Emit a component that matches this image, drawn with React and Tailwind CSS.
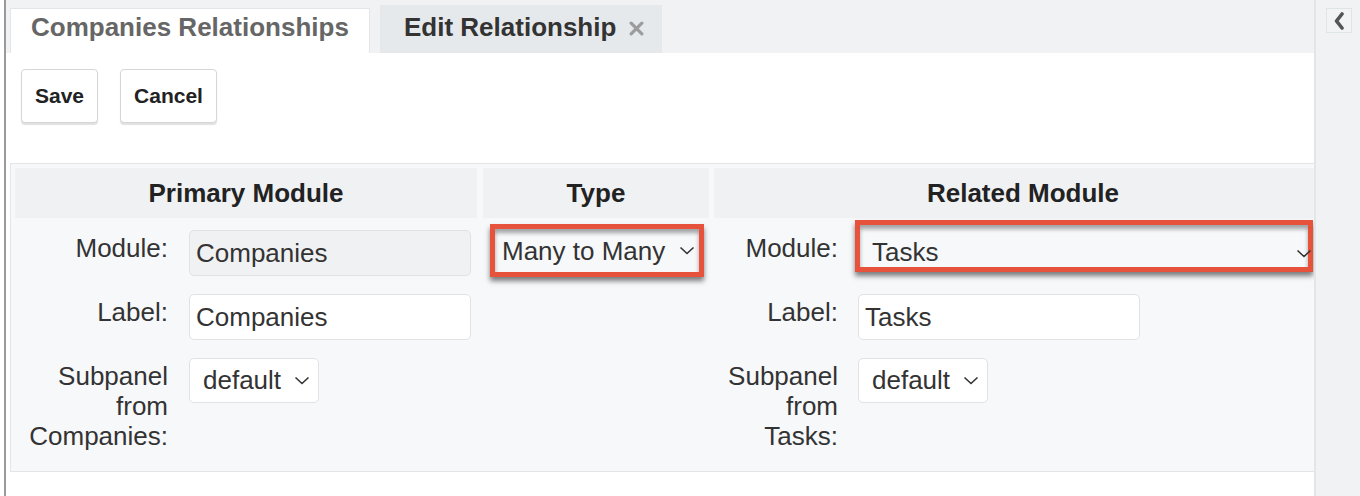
import React from 'react';

const Chevron = ({ className = '' }) => (
  <svg viewBox="0 0 16 9" className={`h-[9px] w-[16px] shrink-0 ${className}`} aria-hidden>
    <polyline points="1.5,1.5 8,7.5 14.5,1.5" fill="none" stroke="#333" strokeWidth="1.6" />
  </svg>
);

function TextInput({ value, disabled = false }) {
  return (
    <input
      readOnly
      value={value}
      className={[
        'h-[46px] w-[282px] rounded-[5px] border border-[#dfe3e6] px-[6px] text-[26px] text-[#333] outline-none',
        disabled ? 'bg-[#f0f1f3]' : 'bg-white',
      ].join(' ')}
    />
  );
}

function SmallSelect({ value }) {
  return (
    <div className="flex h-[45px] w-[130px] items-center rounded-[5px] border border-[#dfe3e6] bg-white pl-[13px] text-[26px] text-[#333]">
      <span>{value}</span>
      <Chevron className="ml-[13px]" />
    </div>
  );
}

function Label({ children, width }) {
  return (
    <div className={`${width} shrink-0 pt-[3px] text-right text-[26px] leading-[30px] text-[#333]`}>
      {children}
    </div>
  );
}

export default function App() {
  return (
    <div className="flex h-[496px] w-full overflow-hidden bg-white font-['Liberation_Sans',Arial,sans-serif] text-[#333]">
      <main className="ml-[4px] flex min-w-0 flex-1 flex-col overflow-hidden border-l-2 border-[#9a9a9a]">
        {/* tabs */}
        <div className="flex h-[53px] shrink-0 items-end gap-[10px] bg-[#f1f2f4] pl-[4px]">
          <div className="h-[45px] w-[360px] border border-b-0 border-[#e2e6e9] bg-white pl-[20px] pt-[3px] text-[26px] font-bold leading-[30px] text-[#666]">
            Companies Relationships
          </div>
          <div className="flex h-[48px] w-[282px] items-start bg-[#e6e9ec] pl-[24px] pt-[7px] text-[26px] font-bold leading-[30px] text-[#333]">
            <span>Edit Relationship</span>
            <svg viewBox="0 0 14 14" className="ml-[13px] mt-[9px] h-[15px] w-[15px]" aria-hidden>
              <path d="M2 2 L12 12 M12 2 L2 12" stroke="#9c9c9c" strokeWidth="3" strokeLinecap="round" />
            </svg>
          </div>
        </div>

        {/* toolbar */}
        <div className="flex shrink-0 gap-[22px] pl-[15px] pt-[16px]">
          <button className="h-[54px] rounded-[4px] border border-[#d6d6d6] bg-white px-[13px] text-[21px] font-bold text-[#222] shadow-[0_2px_1px_rgba(0,0,0,0.12)]">
            Save
          </button>
          <button className="h-[54px] rounded-[4px] border border-[#d6d6d6] bg-white px-[13px] text-[21px] font-bold text-[#222] shadow-[0_2px_1px_rgba(0,0,0,0.12)]">
            Cancel
          </button>
        </div>

        {/* relationship table */}
        <div className="ml-[4px] mt-[40px] w-[1327px] shrink-0 border border-[#e2e6e8] bg-[#f7f8fa] p-[4px]">
          <div className="flex h-[50px] text-[26px] font-bold text-[#222]">
            <div className="flex w-[462px] shrink-0 items-center justify-center bg-[#eff1f3]">Primary Module</div>
            <div className="ml-[6px] flex w-[226px] shrink-0 items-center justify-center bg-[#eff1f3]">Type</div>
            <div className="ml-[5px] flex flex-1 items-center justify-center bg-[#eff1f3]">Related Module</div>
          </div>

          <div className="flex pb-[16px]">
            {/* primary */}
            <div className="flex w-[462px] shrink-0 flex-col gap-[18px] pt-[12px]">
              <div className="flex items-start">
                <Label width="w-[153px]">Module:</Label>
                <div className="ml-[21px]">
                  <TextInput value="Companies" disabled />
                </div>
              </div>
              <div className="flex items-start">
                <Label width="w-[153px]">Label:</Label>
                <div className="ml-[21px]">
                  <TextInput value="Companies" />
                </div>
              </div>
              <div className="flex items-start">
                <Label width="w-[153px]">Subpanel from Companies:</Label>
                <div className="ml-[21px]">
                  <SmallSelect value="default" />
                </div>
              </div>
            </div>

            {/* type */}
            <div className="ml-[6px] w-[226px] shrink-0 pl-[7px] pt-[6px]">
              <div className="relative h-[53px] w-[214px] border-[5px] border-[#e6523c] shadow-[0_4px_5px_rgba(0,0,0,0.5),inset_0_4px_4px_rgba(0,0,0,0.35)]">
                <div className="flex h-full items-center justify-between pl-[7px] pr-[4px] text-[26px] leading-[30px] text-[#333]">
                  <span>Many to Many</span>
                  <Chevron />
                </div>
              </div>
            </div>

            {/* related */}
            <div className="ml-[5px] flex flex-1 flex-col pt-[2px]">
              <div className="flex items-start">
                <div className="w-[124px] shrink-0 pt-[13px] text-right text-[26px] leading-[30px]">Module:</div>
                <div className="relative ml-[17px] h-[52px] w-[458px] shrink-0 border-[5px] border-[#e6523c] shadow-[0_4px_5px_rgba(0,0,0,0.5),inset_0_4px_4px_rgba(0,0,0,0.35)]">
                  <div className="flex h-full items-end justify-between pl-[12px] text-[26px] leading-[30px] text-[#333]">
                    <span>Tasks</span>
                    <Chevron className="-mr-[4px] mb-[9px]" />
                  </div>
                </div>
              </div>
              <div className="mt-[22px] flex items-start">
                <Label width="w-[124px]">Label:</Label>
                <div className="ml-[20px]">
                  <TextInput value="Tasks" />
                </div>
              </div>
              <div className="mt-[18px] flex items-start">
                <Label width="w-[124px]">Subpanel from Tasks:</Label>
                <div className="ml-[20px]">
                  <SmallSelect value="default" />
                </div>
              </div>
            </div>
          </div>
        </div>
      </main>

      <aside className="w-[46px] shrink-0 border-l-2 border-[#e1e7e7] bg-[#f1f2f4] pl-[10px] pt-[8px]">
        <button className="flex h-[25px] w-[26px] items-center justify-center border border-[#dde5e5] bg-[#f1f3f4]" aria-label="Collapse">
          <svg viewBox="0 0 12 18" className="h-[18px] w-[12px]" aria-hidden>
            <polyline points="9,2 3.5,9 9,16" fill="none" stroke="#555" strokeWidth="3.6" strokeLinejoin="round" strokeLinecap="round" />
          </svg>
        </button>
      </aside>
    </div>
  );
}
